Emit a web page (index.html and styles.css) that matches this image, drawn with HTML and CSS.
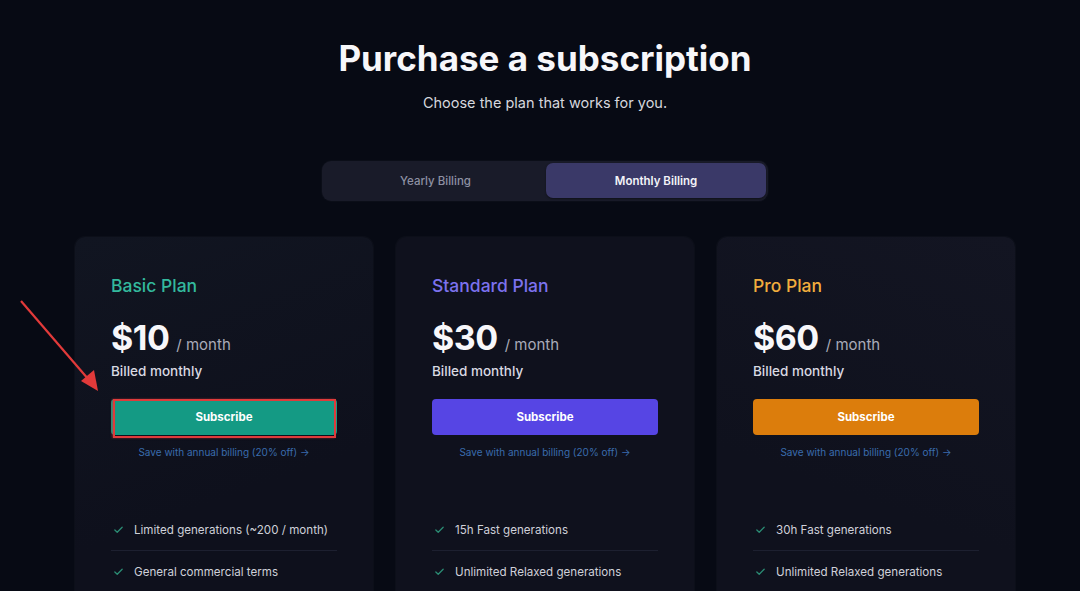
FILE: index.html
```html
<!DOCTYPE html>
<html lang="en">
<head>
<meta charset="utf-8">
<title>Purchase a subscription</title>
<link rel="stylesheet" href="styles.css">
</head>
<body>
<main class="page">
  <header class="head">
    <h1 class="title">Purchase a subscription</h1>
    <p class="subtitle">Choose the plan that works for you.</p>
  </header>

  <div class="toggle">
    <button class="toggle-btn">Yearly Billing</button>
    <button class="toggle-btn active">Monthly Billing</button>
  </div>

  <section class="plans">
    <article class="card basic">
      <h2 class="plan-name">Basic Plan</h2>
      <div class="price"><span class="amount">$10</span><span class="per">/ month</span></div>
      <p class="billed">Billed monthly</p>
      <div class="btn-wrap">
        <button class="subscribe">Subscribe</button>
        <span class="highlight"></span>
      </div>
      <a class="save">Save with annual billing (20% off) →</a>
      <ul class="features">
        <li><svg class="check" viewBox="0 0 12 12"><path d="M2 6.5l2.6 2.5L10 3.5"/></svg>Limited generations (~200 / month)</li>
        <li><svg class="check" viewBox="0 0 12 12"><path d="M2 6.5l2.6 2.5L10 3.5"/></svg>General commercial terms</li>
      </ul>
    </article>

    <article class="card standard">
      <h2 class="plan-name">Standard Plan</h2>
      <div class="price"><span class="amount">$30</span><span class="per">/ month</span></div>
      <p class="billed">Billed monthly</p>
      <div class="btn-wrap">
        <button class="subscribe">Subscribe</button>
      </div>
      <a class="save">Save with annual billing (20% off) →</a>
      <ul class="features">
        <li><svg class="check" viewBox="0 0 12 12"><path d="M2 6.5l2.6 2.5L10 3.5"/></svg>15h Fast generations</li>
        <li><svg class="check" viewBox="0 0 12 12"><path d="M2 6.5l2.6 2.5L10 3.5"/></svg>Unlimited Relaxed generations</li>
      </ul>
    </article>

    <article class="card pro">
      <h2 class="plan-name">Pro Plan</h2>
      <div class="price"><span class="amount">$60</span><span class="per">/ month</span></div>
      <p class="billed">Billed monthly</p>
      <div class="btn-wrap">
        <button class="subscribe">Subscribe</button>
      </div>
      <a class="save">Save with annual billing (20% off) →</a>
      <ul class="features">
        <li><svg class="check" viewBox="0 0 12 12"><path d="M2 6.5l2.6 2.5L10 3.5"/></svg>30h Fast generations</li>
        <li><svg class="check" viewBox="0 0 12 12"><path d="M2 6.5l2.6 2.5L10 3.5"/></svg>Unlimited Relaxed generations</li>
      </ul>
    </article>
  </section>
</main>

<svg class="annotation" viewBox="0 0 1080 591" width="1080" height="591">
  <line x1="21" y1="301" x2="89" y2="380" stroke="#e23a3a" stroke-width="2.2"/>
  <polygon points="98,391 81,381 94,370" fill="#e23a3a"/>
</svg>
</body>
</html>
```

FILE: styles.css
```css
* { box-sizing: border-box; }

html, body {
  margin: 0;
  padding: 0;
  background: #070a14;
  height: 591px;
  overflow: hidden;
}

body {
  font-family: Inter, "Noto Sans", "Liberation Sans", sans-serif;
  color: #ffffff;
  position: relative;
}

.page {
  padding: 36px 0 0 10px;
  display: flex;
  flex-direction: column;
  align-items: center;
}

.head {
  display: flex;
  flex-direction: column;
  align-items: center;
}

.title {
  margin: 0;
  font-size: 35px;
  line-height: 44px;
  font-weight: 700;
  color: #f7f7fa;
}

.subtitle {
  margin: 13px 0 0;
  font-size: 14.5px;
  line-height: 20px;
  color: #d6d7de;
}

.toggle {
  margin-top: 48px;
  width: 446px;
  height: 40px;
  padding: 2px 2px 3px 3px;
  border-radius: 9px;
  background: #191b29;
  display: grid;
  grid-template-columns: 1fr 220px;
  box-shadow: 0 0 0 1px rgba(255,255,255,0.02);
}

.toggle-btn {
  border: 0;
  background: transparent;
  font-family: inherit;
  font-size: 11.5px;
  font-weight: 500;
  color: #8e91a3;
  border-radius: 7px;
}

.toggle-btn.active {
  background: #3a3968;
  color: #f3f3f8;
  font-weight: 600;
  box-shadow: 0 1px 2px rgba(0,0,0,0.4);
}

.plans {
  margin-top: 36px;
  display: flex;
  gap: 23px;
}

.card {
  width: 298px;
  height: 420px;
  padding: 37px 36px 0;
  border-radius: 10px;
  background: #0f111d;
  box-shadow: 0 0 0 1px rgba(255,255,255,0.025);
  display: flex;
  flex-direction: column;
}

.basic { background: linear-gradient(160deg, #111521 0%, #0e101c 60%); }
.pro { background: linear-gradient(200deg, #131522 0%, #0f111d 60%); }

.plan-name {
  margin: 0;
  font-size: 17.5px;
  line-height: 24px;
  font-weight: 500;
}

.basic .plan-name { color: #33b99d; }
.standard .plan-name { color: #7c72ee; }
.pro .plan-name { color: #f1ad3d; }

.price {
  margin-top: 19px;
  display: flex;
  align-items: baseline;
  gap: 7px;
}

.amount {
  font-size: 34px;
  line-height: 42px;
  font-weight: 700;
  letter-spacing: -0.5px;
  color: #f7f7fa;
}

.per {
  font-size: 15px;
  color: #a9abb9;
}

.billed {
  margin: 2px 0 0;
  font-size: 13.5px;
  line-height: 20px;
  font-weight: 500;
  color: #d9dae2;
}

.btn-wrap {
  margin-top: 18px;
  position: relative;
  height: 36px;
}

.subscribe {
  width: 100%;
  height: 36px;
  border: 0;
  border-radius: 4px;
  font-family: inherit;
  font-size: 11.5px;
  font-weight: 700;
  color: #ffffff;
}

.basic .subscribe { background: #149a84; }
.standard .subscribe { background: #5645e4; }
.pro .subscribe { background: #dc7d0c; }

.highlight {
  position: absolute;
  left: 2px;
  right: 1px;
  top: 0;
  bottom: -3px;
  border: 2px solid #df3b3b;
  box-shadow: -1px 0 2px rgba(223,59,59,0.5);
}

.save {
  margin-top: 10px;
  text-align: center;
  font-size: 10px;
  line-height: 14px;
  color: #3a6cae;
}

.features {
  list-style: none;
  margin: 50px 0 0;
  padding: 0;
}

.features li {
  height: 42px;
  display: flex;
  align-items: center;
  gap: 10px;
  padding-left: 2px;
  font-size: 11.6px;
  white-space: nowrap;
  color: #cfd0d9;
  border-bottom: 1px solid #1d2030;
}

.check {
  width: 11px;
  height: 11px;
  flex: none;
  fill: none;
  stroke: #2b8c74;
  stroke-width: 1.4;
  stroke-linecap: round;
  stroke-linejoin: round;
}

.annotation {
  position: absolute;
  left: 0;
  top: 0;
  pointer-events: none;
}
```
